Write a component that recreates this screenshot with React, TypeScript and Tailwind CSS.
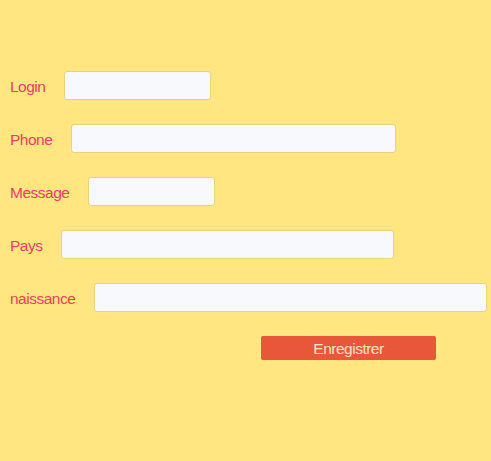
import React from "react";

const rows = [
  { label: "Login", w: 147 },
  { label: "Phone", w: 325 },
  { label: "Message", w: 127 },
  { label: "Pays", w: 333 },
  { label: "naissance", w: 393 },
];

export default function App() {
  return (
    <div
      className="w-[491px] h-[461px] bg-[#ffe680] pt-[71px] pl-[10px] flex flex-col gap-[24px]"
      style={{ fontFamily: "'Liberation Sans', Arial, sans-serif" }}
    >
      {rows.map((r) => (
        <div key={r.label} className="flex items-center h-[29px]">
          <label className="text-[15.5px] tracking-[-0.5px] text-[#ee3d6a] mr-[19px] leading-none pt-[2px]">
            {r.label}
          </label>
          <input
            className="h-[29px] bg-[#f8f9fd] border border-[#ead27e] rounded-[3px] outline-none"
            style={{ width: r.w }}
          />
        </div>
      ))}
      <div className="pl-[251px]">
        <button className="w-[175px] h-[24px] bg-[#e8573a] rounded-[2px] text-[#f7e2c4] text-[15.5px] tracking-[-0.5px] leading-none pt-[1px]">
          Enregistrer
        </button>
      </div>
    </div>
  );
}
